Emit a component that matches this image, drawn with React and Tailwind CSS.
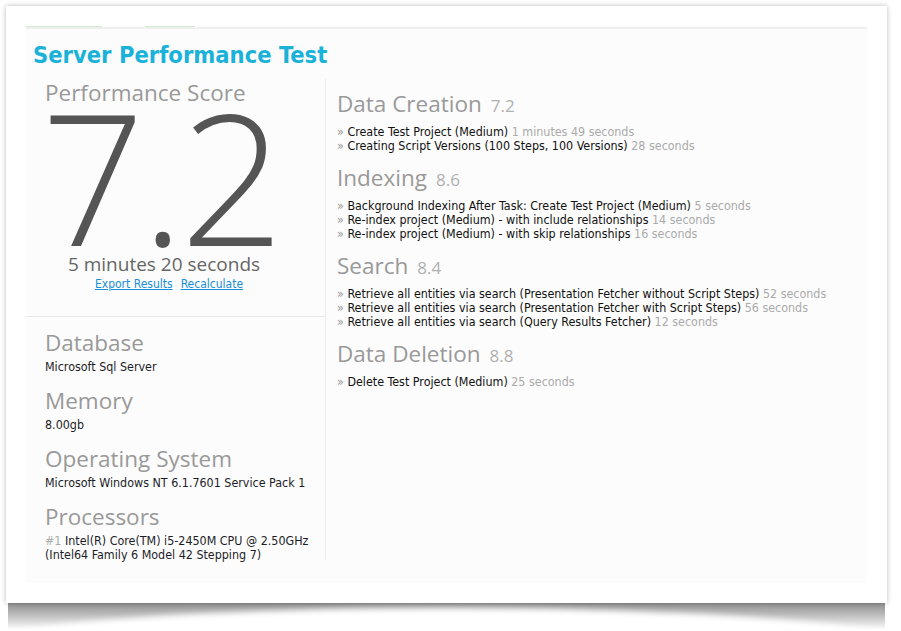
import React from "react";

const small = { fontFamily: '"DejaVu Sans Condensed", "DejaVu Sans", sans-serif' };
const head = { fontFamily: '"Open Sans", "Noto Sans", sans-serif' };

const sections = [
  {
    title: "Data Creation",
    score: "7.2",
    items: [
      ["Create Test Project (Medium)", "1 minutes 49 seconds"],
      ["Creating Script Versions (100 Steps, 100 Versions)", "28 seconds"],
    ],
  },
  {
    title: "Indexing",
    score: "8.6",
    items: [
      ["Background Indexing After Task: Create Test Project (Medium)", "5 seconds"],
      ["Re-index project (Medium) - with include relationships", "14 seconds"],
      ["Re-index project (Medium) - with skip relationships", "16 seconds"],
    ],
  },
  {
    title: "Search",
    score: "8.4",
    items: [
      ["Retrieve all entities via search (Presentation Fetcher without Script Steps)", "52 seconds"],
      ["Retrieve all entities via search (Presentation Fetcher with Script Steps)", "56 seconds"],
      ["Retrieve all entities via search (Query Results Fetcher)", "12 seconds"],
    ],
  },
  {
    title: "Data Deletion",
    score: "8.8",
    items: [["Delete Test Project (Medium)", "25 seconds"]],
  },
];

function InfoBlock({ title, children }) {
  return (
    <div className="mb-[13px]">
      <div style={head} className="text-[22.5px] leading-[28px] text-[#999]">{title}</div>
      <div style={small} className="mt-[3px] text-[12.4px] leading-[14px] text-[#1c1c28]">{children}</div>
    </div>
  );
}

export default function App() {
  return (
    <div className="w-[901px] h-[631px] bg-white overflow-hidden pt-[6px] pl-[6px]">
      <div className="relative w-[881px] h-[597px]">
        <div className="absolute left-[2px] right-[2px] top-[590px] h-[34px] overflow-hidden">
          <div className="absolute inset-0 bg-gradient-to-b from-[#7a7a7a] via-[#b5b5b5] to-white" />
          <div className="absolute left-[-6%] right-[-6%] top-[12px] h-[90px] rounded-[50%] bg-white blur-[3px]" />
        </div>
        <div className="relative w-[881px] h-[597px] bg-white shadow-[0_0_5px_rgba(0,0,0,0.28)] pt-[20px] pl-[20px]">
          <div className="w-[841px] h-[557px] bg-[#fcfcfc]">
            <div className="flex h-[1px]">
              <div className="w-[76px] bg-[#d3e9cc]" />
              <div className="w-[43px]" />
              <div className="w-[50px] bg-[#d3e9cc]" />
            </div>
            <div className="h-[2px] bg-[#efefef]" />
            <div
              style={small}
              className="pl-[7px] pt-[12px] h-[50px] text-[23.5px] leading-[28px] font-bold text-[#1ab2d8]"
            >
              Server Performance Test
            </div>
            <div className="flex">
              <div className="w-[300px] border-r border-[#ebebeb] h-[481px]">
                <div className="pb-[25px] border-b border-[#e8e8e8]">
                  <div style={head} className="pl-[19px] text-[22.5px] leading-[28px] text-[#999]">
                    Performance Score
                  </div>
                  <div
                    style={head}
                    className="pl-[15px] mt-[-7px] text-[182px] leading-[151px] font-light text-[#555] tracking-[-4px]"
                  >
                    7.2
                  </div>
                  <div style={head} className="w-[276px] text-center text-[19px] leading-[26px] text-[#666]">
                    5 minutes 20 seconds
                  </div>
                  <div style={small} className="w-[286px] text-center text-[12px] leading-[14px] text-[#1a8fd8]">
                    <span className="underline">Export Results</span>
                    <span className="ml-[8px] underline">Recalculate</span>
                  </div>
                </div>
                <div className="pl-[19px] pt-[12px]">
                  <InfoBlock title="Database">Microsoft Sql Server</InfoBlock>
                  <InfoBlock title="Memory">8.00gb</InfoBlock>
                  <InfoBlock title="Operating System">Microsoft Windows NT 6.1.7601 Service Pack 1</InfoBlock>
                  <InfoBlock title="Processors">
                    <span className="text-[#aaa]">#1</span> Intel(R) Core(TM) i5-2450M CPU @ 2.50GHz
                    <br />
                    (Intel64 Family 6 Model 42 Stepping 7)
                  </InfoBlock>
                </div>
              </div>
              <div className="pl-[11px] pt-[10px]">
                {sections.map((s) => (
                  <div key={s.title} className="mb-[10px]">
                    <div style={head} className="text-[22.5px] leading-[30px] text-[#999]">
                      {s.title}
                      <span className="ml-[9px] text-[17px] leading-[18px] text-[#b0b0b0]">{s.score}</span>
                    </div>
                    <div style={small} className="mt-[6px] text-[12.4px] leading-[14px]">
                      {s.items.map(([a, b]) => (
                        <div key={a} className="text-[#111]">
                          <span className="text-[#999]">»</span> {a}{" "}
                          <span className="text-[#aaa]">{b}</span>
                        </div>
                      ))}
                    </div>
                  </div>
                ))}
              </div>
            </div>
          </div>
        </div>
      </div>
    </div>
  );
}
